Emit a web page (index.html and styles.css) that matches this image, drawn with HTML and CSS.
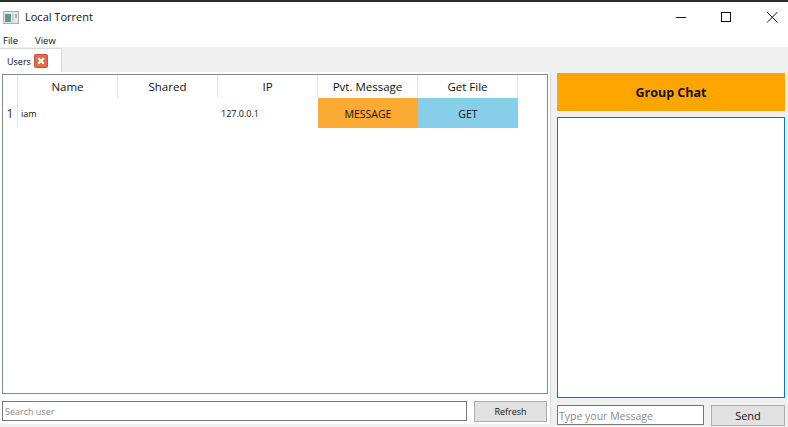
FILE: index.html
```html
<!DOCTYPE html>
<html lang="en">
<head>
	<meta charset="UTF-8">
	<title>Local Torrent</title>
	<link rel="stylesheet" href="styles.css">
</head>
<body>
	<div class="titlebar">
		<svg class="appicon" width="16" height="16" viewBox="0 0 16 16">
			<rect x="0.5" y="1.5" width="15" height="12" fill="#e4e8ea" stroke="#a9aeb2"/>
			<rect x="2" y="4" width="6" height="8" fill="#6f8f96"/>
			<rect x="5" y="6" width="3" height="6" fill="#5f9c86"/>
			<rect x="9" y="4" width="2" height="8" fill="#c4d8cf"/>
			<rect x="12" y="4" width="2" height="4" fill="#a5b4bb"/>
		</svg>
		<span class="title">Local Torrent</span>
		<div class="winbtns">
			<svg width="46" height="16" viewBox="0 0 46 16"><path d="M26 7.5H36" stroke="#111" fill="none"/></svg>
			<svg width="46" height="16" viewBox="0 0 46 16"><rect x="25.5" y="2.5" width="9" height="9" stroke="#111" fill="none"/></svg>
			<svg width="46" height="16" viewBox="0 0 46 16"><path d="M25 2L35.5 12.5M35.5 2L25 12.5" stroke="#111" fill="none"/></svg>
		</div>
	</div>
	<div class="menubar">
		<span class="menu">File</span>
		<span class="menu">View</span>
	</div>
	<div class="tabbar">
		<div class="tab">
			<span>Users</span>
			<svg class="tabclose" width="14" height="14" viewBox="0 0 14 14">
				<rect x="0.5" y="0.5" width="13" height="13" rx="1" fill="#e4694c" stroke="#c2573a"/>
				<path d="M4.2 4.2L9.8 9.8M9.8 4.2L4.2 9.8" stroke="#fff" stroke-width="2.2"/>
			</svg>
		</div>
	</div>
	<div class="main">
		<div class="leftpane">
			<div class="tablebox">
				<div class="row headrow">
					<div class="corner"></div>
					<div class="hcell">Name</div>
					<div class="hcell">Shared</div>
					<div class="hcell">IP</div>
					<div class="hcell">Pvt. Message</div>
					<div class="hcell">Get File</div>
				</div>
				<div class="row datarow">
					<div class="rownum">1</div>
					<div class="cell">iam</div>
					<div class="cell"></div>
					<div class="cell">127.0.0.1</div>
					<div class="action msg">MESSAGE</div>
					<div class="action get">GET</div>
				</div>
			</div>
			<div class="searchrow">
				<input class="search" placeholder="Search user">
				<button class="refresh">Refresh</button>
			</div>
		</div>
		<div class="rightpane">
			<div class="groupchat">Group Chat</div>
			<div class="chatbox"></div>
			<div class="sendrow">
				<input class="msginput" placeholder="Type your Message">
				<button class="send">Send</button>
			</div>
		</div>
	</div>
</body>
</html>
```

FILE: styles.css
```css
html, body { margin: 0; padding: 0; }
body {
	width: 788px;
	height: 427px;
	overflow: hidden;
	background: #f0f0f0;
	border-top: 2px solid #2b2b2b;
	box-sizing: border-box;
	font-family: "Open Sans", "Noto Sans", sans-serif;
	color: #111;
}

.titlebar { height: 31px; background: #fff; display: flex; align-items: center; padding-left: 3px; }
.appicon { margin-right: 6px; }
.title { font-size: 11px; line-height: 29px; height: 31px; }
.winbtns { margin-left: auto; display: flex; }
.winbtns svg { display: block; }

.menubar { height: 14px; background: #fff; display: flex; align-items: center; padding-left: 3px; gap: 17px; }
.menu { font-size: 9.5px; }

.tabbar { height: 25px; display: flex; align-items: flex-end; }
.tab {
	width: 62px;
	height: 24px;
	box-sizing: border-box;
	background: #fff;
	border: 1px solid #d9d9d9;
	border-width: 1px 1px 0 0;
	display: flex;
	align-items: center;
	padding-left: 7px;
	gap: 3px;
	font-size: 9px;
	line-height: 25px;
}
.tab span { height: 23px; }
.tabclose { display: block; margin-top: 1px; }

.main { display: flex; height: 355px; }
.leftpane {
	width: 551px;
	height: 352px;
	background: #fff;
	padding: 2px 2px 0 2px;
	box-sizing: border-box;
	border-right: 1px solid #d9d9d9;
}
.tablebox { height: 320px; box-sizing: border-box; border: 1px solid #828790; }
.row { display: flex; }
.headrow { height: 23px; }
.corner { width: 14px; border-right: 1px solid #e5e5e5; }
.hcell { width: 99px; border-right: 1px solid #e5e5e5; text-align: center; font-size: 11.5px; line-height: 23px; }
.datarow { height: 30px; }
.rownum { width: 14px; border-right: 1px solid #e5e5e5; text-align: center; font-size: 12px; line-height: 31px; color: #5a1030; }
.cell { width: 96px; padding-left: 3px; font-size: 9px; line-height: 32px; margin-right: 1px; }
.action { width: 100px; text-align: center; font-size: 10.5px; line-height: 32px; }
.msg { background: #fbaa33; }
.get { background: #87ceeb; }

.searchrow { display: flex; margin-top: 7px; gap: 7px; }
.search { width: 465px; height: 20px; box-sizing: border-box; border: 1px solid #767676; padding: 0 2px; font: 9px "Open Sans", sans-serif; outline: none; }
.search::placeholder, .msginput::placeholder { color: #8a8a8a; opacity: 1; }
.refresh { width: 73px; height: 21px; box-sizing: border-box; background: #e1e1e1; border: 1px solid #adadad; font: 9px "Open Sans", sans-serif; padding: 0; color: #111; }

.rightpane { width: 228px; margin-left: 6px; padding-top: 1px; }
.groupchat { height: 38px; background: #ffa500; text-align: center; font-size: 12.5px; font-weight: 700; line-height: 39px; }
.chatbox { height: 281px; box-sizing: border-box; margin-top: 6px; background: #fff; border: 1px solid #0078d7; }
.sendrow { display: flex; margin-top: 7px; justify-content: space-between; }
.msginput { width: 147px; height: 20px; box-sizing: border-box; border: 1px solid #767676; padding: 1px 1px 0; font: 10.5px "Open Sans", sans-serif; outline: none; }
.send { width: 74px; height: 21px; box-sizing: border-box; background: #e1e1e1; border: 1px solid #adadad; font: 11px "Open Sans", sans-serif; padding: 0; color: #111; }
```
